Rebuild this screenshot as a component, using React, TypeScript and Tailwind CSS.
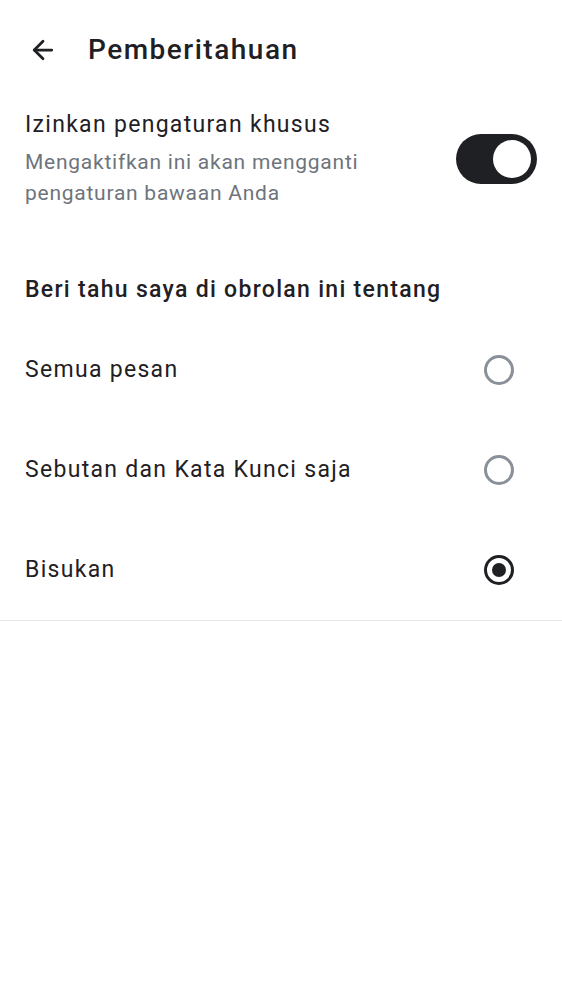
import { ArrowLeft } from "lucide-react"

const Radio = ({ checked }: { checked?: boolean }) => {
  if (checked) {
    return (
      <div className="w-[30px] h-[30px] rounded-full border-[3px] border-[#1f2024] flex items-center justify-center">
        <div className="w-[14px] h-[14px] rounded-full bg-[#1f2024]" />
      </div>
    )
  }
  return <div className="w-[30px] h-[30px] rounded-full border-[3px] border-[#8a9098]" />
}

const App = () => {
  const options = [
    { label: "Semua pesan", checked: false },
    { label: "Sebutan dan Kata Kunci saja", checked: false },
    { label: "Bisukan", checked: true },
  ]

  return (
    <div className="w-[562px] min-h-[1000px] bg-white text-[#1f2024] font-['Roboto',sans-serif]">
      <div className="h-[100px] flex items-center pl-[28px]">
        <ArrowLeft size={30} strokeWidth={2.2} className="text-[#1f2024]" />
        <h1 className="ml-[30px] text-[28px] font-medium tracking-[1.5px] leading-none">Pemberitahuan</h1>
      </div>

      <div className="flex items-center justify-between pl-[25px] pr-[25px] pt-[3px]">
        <div>
          <div className="text-[23px] leading-[44px] tracking-[1.3px]">Izinkan pengaturan khusus</div>
          <div className="text-[21px] leading-[31px] text-[#6e747c] tracking-[0.75px] w-[380px]">
            Mengaktifkan ini akan mengganti pengaturan bawaan Anda
          </div>
        </div>
        <div className="w-[81px] h-[50px] mt-[6px] rounded-full bg-[#1f2024] flex items-center justify-end pr-[6px]">
          <div className="w-[38px] h-[38px] rounded-full bg-white" />
        </div>
      </div>

      <div className="pl-[25px] mt-[63px] text-[23px] font-medium leading-[36px] tracking-[1.3px]">
        Beri tahu saya di obrolan ini tentang
      </div>

      <div className="mt-[12px] border-b border-[#e6e7e9]">
        {options.map((o) => (
          <div key={o.label} className="h-[100px] flex items-center justify-between pl-[25px] pr-[48px]">
            <span className="text-[23px] tracking-[1.3px]">{o.label}</span>
            <Radio checked={o.checked} />
          </div>
        ))}
      </div>
    </div>
  )
}

export default App
